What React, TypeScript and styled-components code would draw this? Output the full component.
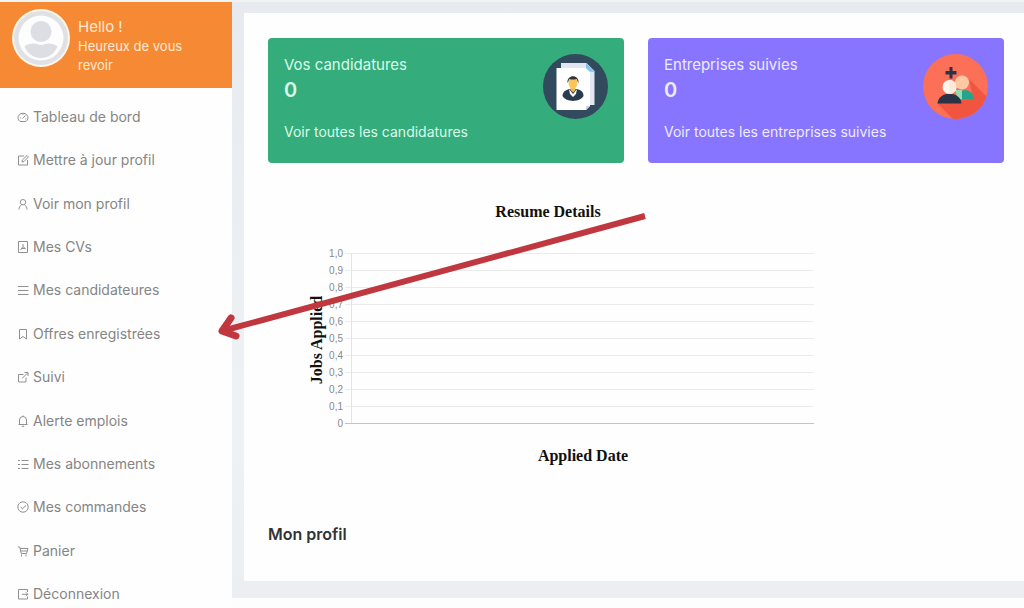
import React from "react";
import styled, { createGlobalStyle } from "styled-components";

const GlobalStyle = createGlobalStyle`
  *, *::before, *::after { box-sizing: border-box; }
  body {
    margin: 0;
    background: #fdfdfd;
    font-family: Inter, "Open Sans", sans-serif;
    color: #777;
  }
  h2, p { margin: 0; }
`;

const Page = styled.div`
  position: relative;
  display: flex;
  min-height: 100vh;
  border-top: 2px solid #f1f4f5;
`;

const Sidebar = styled.aside`
  flex: 0 0 232px;
  display: flex;
  flex-direction: column;
  background: #fefefe;
`;

const Greeting = styled.header`
  display: flex;
  gap: 8px;
  height: 86px;
  padding: 7px 12px;
  background: #f68933;
  color: #ffe9d3;
`;

const GreetingText = styled.div`
  width: 124px;
  padding-top: 8px;
`;

const Hello = styled.p`
  font-size: 15px;
  line-height: 20px;
`;

const Welcome = styled.p`
  font-size: 13px;
  line-height: 19px;
`;

const Nav = styled.nav`
  flex: 1;
  display: flex;
  flex-direction: column;
  justify-content: space-between;
  padding-top: 15px;
`;

const NavLink = styled.a`
  display: flex;
  align-items: center;
  gap: 4px;
  height: 28px;
  padding-left: 17px;
  font-size: 14px;
  line-height: 20px;
  color: #858585;
  text-decoration: none;
`;

const NavIcon = styled.svg`
  width: 12px;
  height: 12px;
  fill: none;
  stroke: #909090;
  stroke-width: 1;
`;

const Main = styled.main`
  flex: 1;
  min-width: 0;
  margin-bottom: 10px;
  padding: 11px 0 17px 12px;
  background: linear-gradient(#e7ebef, #eef2f5 70%, #eceff2);
`;

const Panel = styled.div`
  height: 100%;
  padding: 25px 20px 32px 24px;
  background: #fefefe;
`;

const Cards = styled.section`
  display: grid;
  grid-template-columns: 1fr 1fr;
  gap: 24px;
`;

const Card = styled.article<{ $color: string; $ink: string }>`
  display: flex;
  justify-content: space-between;
  height: 125px;
  padding: 16px;
  border-radius: 4px;
  background: ${(p) => p.$color};
  color: ${(p) => p.$ink};
`;

const CardTitle = styled.p`
  font-size: 15px;
  line-height: 22px;
`;

const CardCount = styled.p`
  margin-bottom: 18px;
  font-size: 20px;
  font-weight: 600;
  line-height: 28px;
`;

const CardLink = styled.a`
  display: block;
  font-size: 14px;
  line-height: 20px;
  color: inherit;
  text-decoration: none;
`;

const ChartBox = styled.svg`
  display: block;
  width: 552px;
  height: 290px;
  margin: 27px 0 42px;
`;

const ProfileTitle = styled.h2`
  font-size: 16px;
  font-weight: 600;
  line-height: 24px;
  color: #333;
`;

const Arrow = styled.svg`
  position: absolute;
  left: 210px;
  top: 204px;
  width: 444px;
  height: 144px;
  pointer-events: none;
`;

const items: { label: string; icon: React.ReactNode }[] = [
  {
    label: "Tableau de bord",
    icon: <path d="M3 10.5a5 4.6 0 1 1 6 0zM5.5 7.5l3-3M3.2 7h1M6 3.2v.8M8.4 8h.8" />,
  },
  {
    label: "Mettre à jour profil",
    icon: <path d="M7 2H1.5v9h9V6M5 8l.4-2L10 1.500l1.400 1.400L7 7.500z" />,
  },
  {
    label: "Voir mon profil",
    icon: <path d="M6 1.500a2.700 2.700 0 1 1 0 5.400a2.700 2.700 0 1 1 0-5.400M2 11.500c0-2 .8-3.600 2.600-4.800M10 11.500c0-2-.8-3.600-2.600-4.800" />,
  },
  {
    label: "Mes CVs",
    icon: <path d="M1.500.5h9v11h-9zM6 3v2.500L3.500 9M6 5.500L8.800 8M4.500 7.500h3.500" />,
  },
  { label: "Mes candidateures", icon: <path d="M1 2.500h10.500M1 6.500h10.500M1 10.500h10.500" /> },
  { label: "Offres enregistrées", icon: <path d="M2.500 1.500h7v9.500L6 8.500L2.500 11z" /> },
  { label: "Suivi", icon: <path d="M6.500 3.500h-5v7.500h7.500V6.500M5 7.500L10.500 2M7.500 1.500H11V5" /> },
  {
    label: "Alerte emplois",
    icon: <path d="M1.500 9.500h9M2.500 9.500V5a3.500 3.500 0 0 1 7 0v4.500M6 .5v1M4.800 11.300h2.400" />,
  },
  {
    label: "Mes abonnements",
    icon: <path d="M4.500 2.500h7M4.500 6.500h7M4.500 10.500h7M1 2.500h2M1 6.500h2M1 10.500h2" />,
  },
  {
    label: "Mes commandes",
    icon: <path d="M6 .8a5.200 5.200 0 1 1 0 10.400A5.200 5.200 0 1 1 6 .8M3.700 6l1.800 1.800L9 4.500" />,
  },
  {
    label: "Panier",
    icon: <path d="M.8 2h2l1.400 6.500h5.300L11 3.500H3.200M3.700 6h6.600M4.500 9.500v2M9 9.500v2" />,
  },
  { label: "Déconnexion", icon: <path d="M10.500 4V1.500h-9v9.500h9V8.500M5 6.300h6M8.800 4.300l2 2l-2 2" /> },
];

const Avatar = () => (
  <svg width="58" height="58" viewBox="0 0 58 58" aria-hidden="true">
    <circle cx="29" cy="29" r="29" fill="#fff5e9" />
    <circle cx="29" cy="29" r="27" fill="#dfe1e5" />
    <circle cx="29" cy="29" r="22.500" fill="#fdfdfe" />
    <circle cx="29" cy="22.500" r="10.500" fill="#dcdee3" />
    <path d="M12.500 37c5-3 9.500-3 12.500-2q4 2 8 0c3-1 7.500-1 12.500 2c-5 16-28 16-33 0z" fill="#dcdee3" />
  </svg>
);

const ResumeIcon = () => (
  <svg width="65" height="65" viewBox="0 0 65 65" aria-hidden="true">
    <circle cx="32.500" cy="32.500" r="32.500" fill="#324a5e" />
    <path d="M18 9h25.500l8 8v34H18z" fill="#e2e6f2" />
    <path d="M43 9l8.500 8.500H43z" fill="#84c4ea" />
    <path d="M13.500 14H43l4 4v34l-4 4H13.500z" fill="#fff" />
    <path d="M43 9v5l4 3.500h4.500z" fill="#84c4ea" />
    <path d="M47 52h-4v4z" fill="#cfd5e4" />
    <path d="M19.500 42c0-5 5-7 8-7h5c4 0 8 2 8 7c-4 6.500-17 6.500-21 0z" fill="#2b3b4e" />
    <path d="M26 35l4 5l4-5l-1 5l-3 3l-3-3z" fill="#fff" />
    <path d="M27.500 31h5v5L30 38.500L27.500 36z" fill="#f1b84c" />
    <ellipse cx="30" cy="29" rx="4.500" ry="5.500" fill="#fac65b" />
    <path d="M24.500 29c-1-9 12-9 11 0c-1-1-1-3-2-4q-4 1-7 0c-1 1-1 3-2 4z" fill="#333" />
  </svg>
);

const FollowIcon = () => (
  <svg width="65" height="65" viewBox="0 0 65 65" aria-hidden="true">
    <defs>
      <clipPath id="badge">
        <circle cx="32.500" cy="32.500" r="32.500" />
      </clipPath>
    </defs>
    <g clipPath="url(#badge)">
      <path d="M0 0h65v65H0z" fill="#fc7058" />
      <path d="M46 25l25 25v25H40L14 49l36-5z" fill="#f1543f" />
      <path d="M26.500 13h3v4h4v3.500h-4v4h-3v-4h-4V17h4z" fill="#2b3347" />
      <path d="M35 45c0-12 14-12 16 0z" fill="#24a48a" />
      <path d="M32 36h7v9h-4z" fill="#8ee0b4" />
      <circle cx="39" cy="28.500" r="7" fill="#fdc8a2" />
      <path d="M14.500 49.500c1-13 23-13 24 0z" fill="#2b3347" />
      <circle cx="26.500" cy="33" r="7" fill="#fff8ee" />
      <path d="M26.500 26a7 7 0 0 1 0 14z" fill="#f9ead9" />
    </g>
  </svg>
);

const ticks = ["1,0", "0,9", "0,8", "0,7", "0,6", "0,5", "0,4", "0,3", "0,2", "0,1", "0"];

const Chart = () => (
  <ChartBox viewBox="0 0 552 290" role="img" aria-label="Resume Details">
    <g fontFamily='"Liberation Serif", serif' fontWeight="700" fontSize="16" fill="#111" textAnchor="middle">
      <text x="280" y="27">Resume Details</text>
      <text x="315" y="271">Applied Date</text>
      <text transform="translate(54 150) rotate(-90)">Jobs Applied</text>
    </g>
    <g fontFamily='"Liberation Sans", sans-serif' fontSize="10" fill="#888" textAnchor="end">
      {ticks.map((t, i) => (
        <g key={t}>
          <path d={`M77 ${63.5 + i * 17}H546`} stroke={i === 10 ? "#c4c4c4" : "#ebebeb"} />
          <text x="75" y={67 + i * 17}>{t}</text>
        </g>
      ))}
      <path d="M83.500 63v170" stroke="#e4e4e4" />
    </g>
  </ChartBox>
);

export default function App() {
  return (
    <>
      <GlobalStyle />
      <Page>
        <Sidebar>
          <Greeting>
            <Avatar />
            <GreetingText>
              <Hello>Hello !</Hello>
              <Welcome>Heureux de vous revoir</Welcome>
            </GreetingText>
          </Greeting>
          <Nav>
            {items.map((item) => (
              <NavLink href="#" key={item.label}>
                <NavIcon viewBox="0 0 12 12" aria-hidden="true">{item.icon}</NavIcon>
                {item.label}
              </NavLink>
            ))}
          </Nav>
        </Sidebar>
        <Main>
          <Panel>
            <Cards>
              <Card $color="#34ac7b" $ink="#d9fbea">
                <div>
                  <CardTitle>Vos candidatures</CardTitle>
                  <CardCount>0</CardCount>
                  <CardLink href="#">Voir toutes les candidatures</CardLink>
                </div>
                <ResumeIcon />
              </Card>
              <Card $color="#8775ff" $ink="#eeebff">
                <div>
                  <CardTitle>Entreprises suivies</CardTitle>
                  <CardCount>0</CardCount>
                  <CardLink href="#">Voir toutes les entreprises suivies</CardLink>
                </div>
                <FollowIcon />
              </Card>
            </Cards>
            <Chart />
            <ProfileTitle>Mon profil</ProfileTitle>
          </Panel>
        </Main>
        <Arrow viewBox="0 0 444 144" fill="none" stroke="#c0373f" strokeWidth="6" aria-hidden="true">
          <path d="M435 10L12 125" />
          <path d="M21 112L12 125L26 130" strokeWidth="7" strokeLinecap="round" strokeLinejoin="round" />
        </Arrow>
      </Page>
    </>
  );
}
